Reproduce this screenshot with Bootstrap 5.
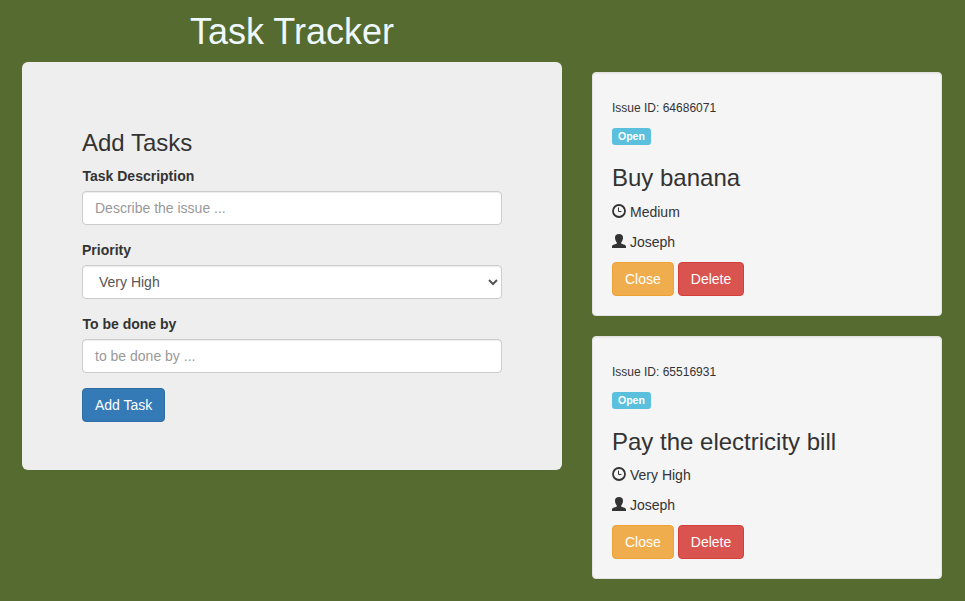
<!DOCTYPE html>
<html lang="en">
<head>
<meta charset="utf-8">
<meta name="viewport" content="width=device-width, initial-scale=1">
<title>Task Tracker</title>
<link href="https://cdn.jsdelivr.net/npm/bootstrap@5.3.0/dist/css/bootstrap.min.css" rel="stylesheet">
<style>
  body { background: #556b2f; color: #333; font: 14px/20px "Liberation Sans", Arial, sans-serif; }
  .tracker { padding: 12.4px 23px 0 22px; gap: 30px; }
  .entry-col { flex: 0 0 540px; }
  .issue-col { flex: 0 0 350px; padding-top: 59.6px; }
  .page-title { color: aliceblue; font-size: 36px; line-height: 39.6px; margin-bottom: 10px; }
  .entry-panel { background: #eee; border-radius: 6px; padding: 48px 60px; }
  .section-title { font-size: 24px; line-height: 26.4px; font-weight: 400; margin: 20px 0 10px; }
  .form-label { margin: 0 0 5px; font-weight: 700; display: block; padding-left: .5px; }
  .field { margin-bottom: 15px; }
  .form-control, .form-select { height: 34px; padding: 6px 12px; font-size: 14px; line-height: 20px; color: #555;
    border: 1px solid #ccc; border-radius: 4px; box-shadow: inset 0 1px 1px rgba(0,0,0,.075); background-color: #fff; }
  .form-control::placeholder { color: #999; }
  .form-select { appearance: auto; background-image: none; }
  .btn { font-size: 14px; line-height: 20px; padding: 6px 12px; border-radius: 4px; --bs-btn-color: #fff; display: block; }
  .btn-primary { --bs-btn-bg: #337ab7; --bs-btn-border-color: #2e6da4; }
  .btn-warning { --bs-btn-bg: #f0ad4e; --bs-btn-border-color: #eea236; }
  .btn-danger { --bs-btn-bg: #d9534f; --bs-btn-border-color: #d43f3a; }
  .issue { background: #f5f5f5; border: 1px solid #e3e3e3; border-radius: 4px; padding: 19px; margin-bottom: 20px;
    box-shadow: inset 0 1px 1px rgba(0,0,0,.05); }
  .issue-id { font-size: 12px; line-height: 13.2px; font-weight: 400; margin: 10px 0; }
  .issue p { margin: 0 0 10px; height: 20px; }
  .status { display: block; width: fit-content; background: #5bc0de; color: #fff; font-weight: 700; font-size: 10.5px; line-height: 10px;
    padding: 3px 6px 4px; border-radius: 3px; }
  .status-row { padding-top: 2.8px; }
  .glyph { width: 14px; height: 14px; flex: none; margin: 2px 4px 0 0; }
  .actions { gap: 4px; }
</style>
<script src="https://cdn.jsdelivr.net/npm/bootstrap@5.3.0/dist/js/bootstrap.bundle.min.js"></script>
</head>
<body>
<svg class="d-none" aria-hidden="true">
  <symbol id="clock" viewBox="0 0 14 14">
    <circle cx="7" cy="7" r="6" fill="none" stroke="#333" stroke-width="1.8"/>
    <path d="M6.5 3.5V7.5H9.5" fill="none" stroke="#333" stroke-width="1"/>
  </symbol>
  <symbol id="person" viewBox="0 0 14 14">
    <path fill="#333" d="M7 0C9.6 0 11 1.3 11 3.6C11 5.8 10.3 7.3 9.2 8.4V9.6C9.8 10.3 14 10.6 14 12.6V14H0V12.6C0 10.6 4.2 10.3 4.8 9.6V8.4C3.7 7.3 3 5.8 3 3.6C3 1.3 4.4 0 7 0Z"/>
  </symbol>
</svg>
<main class="tracker d-flex align-items-start">
  <div class="entry-col">
    <h1 class="page-title text-center fw-normal">Task Tracker</h1>
    <section class="entry-panel">
      <h3 class="section-title">Add Tasks</h3>
      <form>
        <div class="field">
          <label class="form-label" for="desc">Task Description</label>
          <input class="form-control" id="desc" type="text" placeholder="Describe the issue ...">
        </div>
        <div class="field">
          <label class="form-label ps-0" for="priority">Priority</label>
          <select class="form-select" id="priority"><option>Very High</option><option>High</option><option>Medium</option><option>Low</option></select>
        </div>
        <div class="field">
          <label class="form-label" for="assignee">To be done by</label>
          <input class="form-control" id="assignee" type="text" placeholder="to be done by ...">
        </div>
        <button class="btn btn-primary" type="button">Add Task</button>
      </form>
    </section>
  </div>
  <div class="issue-col">
    <article class="issue">
      <h6 class="issue-id">Issue ID: 64686071</h6>
      <p class="status-row"><span class="status">Open</span></p>
      <h3 class="section-title">Buy banana</h3>
      <p class="d-flex"><svg class="glyph"><use href="#clock"/></svg>Medium</p>
      <p class="d-flex"><svg class="glyph"><use href="#person"/></svg>Joseph</p>
      <div class="actions d-flex"><a class="btn btn-warning" href="#">Close</a><a class="btn btn-danger" href="#">Delete</a></div>
    </article>
    <article class="issue">
      <h6 class="issue-id">Issue ID: 65516931</h6>
      <p class="status-row"><span class="status">Open</span></p>
      <h3 class="section-title">Pay the electricity bill</h3>
      <p class="d-flex"><svg class="glyph"><use href="#clock"/></svg>Very High</p>
      <p class="d-flex"><svg class="glyph"><use href="#person"/></svg>Joseph</p>
      <div class="actions d-flex"><a class="btn btn-warning" href="#">Close</a><a class="btn btn-danger" href="#">Delete</a></div>
    </article>
  </div>
</main>
</body>
</html>
